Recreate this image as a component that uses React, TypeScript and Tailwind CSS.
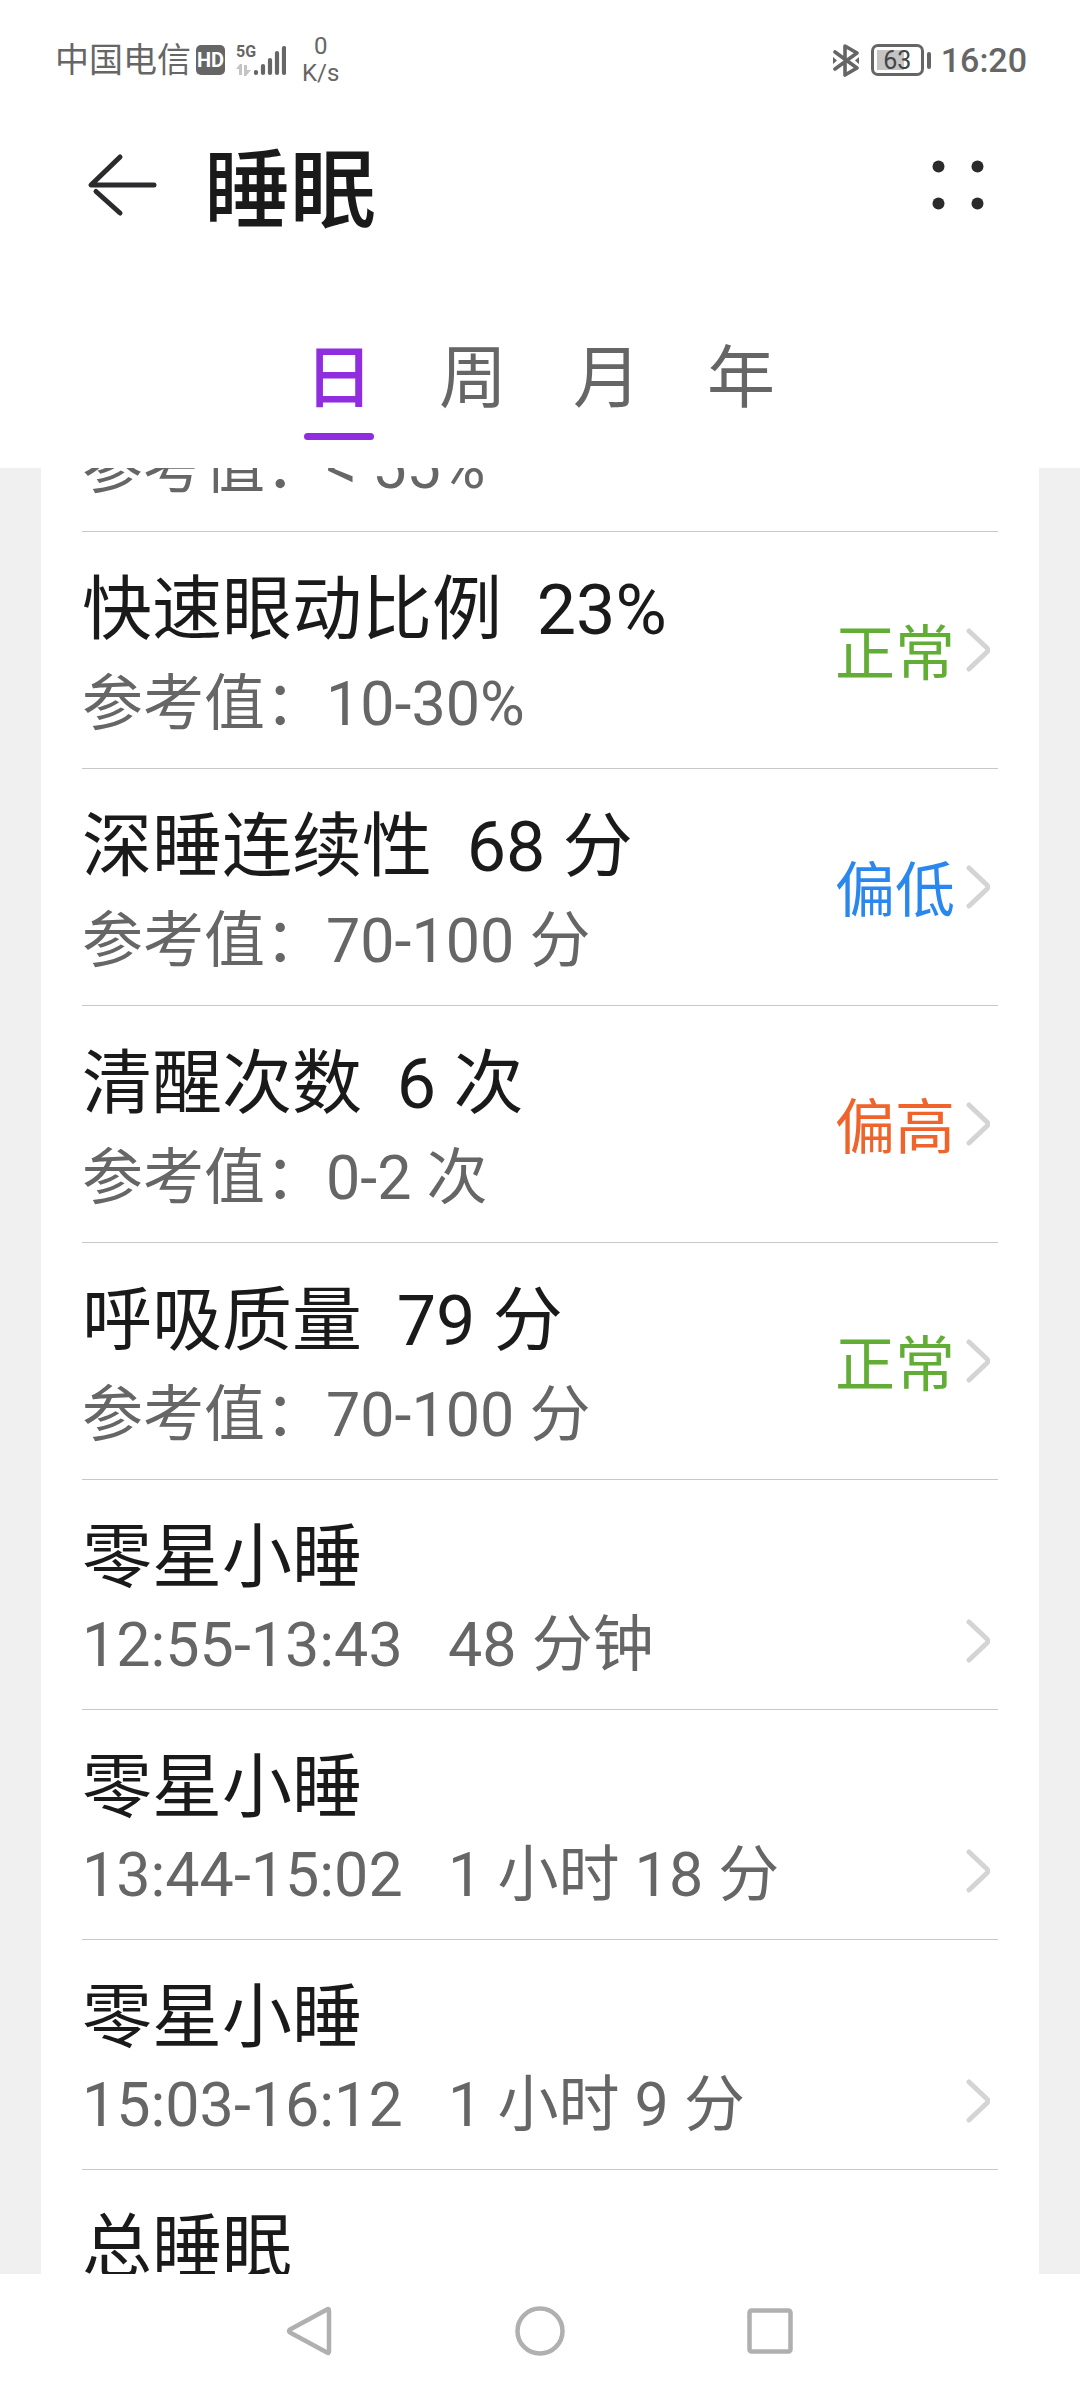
import { useState } from "react";

type Tone = "normal" | "low" | "high";

const toneClass: Record<Tone, string> = {
  normal: "text-[#62ad35]",
  low: "text-[#2a87ee]",
  high: "text-[#f0642b]",
};

const metrics: { title: string; value: string; range: string; status: string; tone: Tone }[] = [
  { title: "快速眼动比例", value: "23%", range: "10-30%", status: "正常", tone: "normal" },
  { title: "深睡连续性", value: "68 分", range: "70-100 分", status: "偏低", tone: "low" },
  { title: "清醒次数", value: "6 次", range: "0-2 次", status: "偏高", tone: "high" },
  { title: "呼吸质量", value: "79 分", range: "70-100 分", status: "正常", tone: "normal" },
];

const naps = [
  { time: "12:55-13:43", duration: "48 分钟" },
  { time: "13:44-15:02", duration: "1 小时 18 分" },
  { time: "15:03-16:12", duration: "1 小时 9 分" },
];

function Chevron() {
  return (
    <svg className="block h-[44px] w-[24px] shrink-0" viewBox="0 0 24 44" fill="none" stroke="#d4d4d4" strokeWidth="5" strokeLinecap="round" strokeLinejoin="round" aria-hidden="true">
      <path d="M3 3 21 20Q22.500 22 21 24L3 41" />
    </svg>
  );
}

function StatusBar() {
  return (
    <div className="flex h-[120px] shrink-0 items-center justify-between pr-[53px] pl-[55px] text-[#666]">
      <div className="flex items-center">
        <span className="text-[34px] leading-[36px]">中国电信</span>
        <span className="ml-[5px] flex h-[30px] w-[29px] items-center justify-center rounded-[5px] bg-[#666] text-[20px] leading-none font-bold text-white">HD</span>
        <div className="ml-[11px] flex h-[32px] w-[18px] flex-col justify-between">
          <span className="text-[16px] leading-[16px] font-bold">5G</span>
          <svg className="h-[12px] w-[16px]" viewBox="0 0 16 12" fill="#c4c4c4" aria-hidden="true">
            <path d="M0 5 4 0H6V11H3V5ZM8 1H11V6L15 6 10 12H8Z" />
          </svg>
        </div>
        <svg className="h-[32px] w-[32px]" viewBox="0 0 32 32" stroke="#666" strokeWidth="4.200" strokeLinecap="round" role="img" aria-label="信号">
          <path d="M2 28V29M9 22V29M16 16V29M23 9V29M30 4V29" />
        </svg>
        <div className="ml-[16px] flex flex-col items-center text-[24px] leading-[27px]">
          <span>0</span>
          <span>K/s</span>
        </div>
      </div>
      <div className="flex items-center">
        <svg className="h-[34px] w-[28px]" viewBox="0 0 28 34" fill="none" stroke="#666" strokeWidth="3.600" strokeLinecap="round" strokeLinejoin="round" role="img" aria-label="蓝牙">
          <path d="M3 9 25 25 13 32V3L25 10 3 26" />
          <path d="M1 14 5 17.500 1 21ZM27 14 23 17.500 27 21Z" fill="#666" stroke="none" />
        </svg>
        <div className="ml-[11px] flex h-[32px] w-[53px] rounded-[7px] border-[3px] border-[#666] p-[3px]">
          <div className="flex w-full items-center justify-center bg-linear-to-r from-[#c4c4c4] from-65% to-transparent to-65% text-[25px] leading-none text-[#444]">63</div>
        </div>
        <div className="ml-[3px] h-[17px] w-[4px] rounded-full bg-[#666]" />
        <span className="ml-[10px] text-[34px] leading-[36px] font-medium">16:20</span>
      </div>
    </div>
  );
}

function Header() {
  return (
    <header className="flex h-[130px] shrink-0 items-center justify-between pr-[96px] pl-[86px]">
      <div className="flex items-center">
        <button type="button" aria-label="返回">
          <svg className="block h-[66px] w-[72px]" viewBox="0 0 72 66" fill="none" stroke="#2b2b2e" strokeWidth="5" strokeLinecap="round" strokeLinejoin="round">
            <path d="M34 5 5 33H68" />
            <path d="M10 39.500 34 61" />
          </svg>
        </button>
        <h1 className="ml-[46px] pt-[14px] text-[86px] leading-[116px] font-medium text-[#1a1a1a]">睡眠</h1>
      </div>
      <button type="button" aria-label="更多">
        <svg className="block h-[50px] w-[52px]" viewBox="0 0 52 50" fill="#2b2b2b">
          <circle cx="6.500" cy="6.500" r="6" />
          <circle cx="45.500" cy="6.500" r="6" />
          <circle cx="6.500" cy="43.500" r="6" />
          <circle cx="45.500" cy="43.500" r="6" />
        </svg>
      </button>
    </header>
  );
}

function Tabs() {
  const [active, setActive] = useState("日");
  return (
    <div role="tablist" className="flex h-[218px] shrink-0 items-end justify-center gap-[64px] pb-[28px]">
      {["日", "周", "月", "年"].map((t) => (
        <button
          key={t}
          type="button"
          role="tab"
          aria-selected={t === active}
          onClick={() => setActive(t)}
          className={
            t === active
              ? "flex w-[70px] flex-col items-center gap-[6px] text-[68px] leading-[96px] font-medium text-[#8f2ddf]"
              : "flex w-[70px] flex-col items-center gap-[6px] text-[68px] leading-[96px] text-[#666]"
          }
        >
          {t}
          <span className={t === active ? "h-[7px] w-full rounded-full bg-[#8f2ddf]" : "h-[7px] w-full"} />
        </button>
      ))}
    </div>
  );
}

export default function App() {
  return (
    <div className="flex h-screen flex-col overflow-hidden bg-white font-[Roboto,'Noto_Sans_CJK_SC',sans-serif]">
      <StatusBar />
      <Header />
      <Tabs />
      <main className="min-h-0 flex-1 overflow-hidden bg-[#f0f0f0] px-[41px]">
        <ul className="min-h-full bg-white px-[41px]">
          <li className="flex h-[64px] flex-col justify-end overflow-hidden border-b border-[#c8c8c8] pb-[24px]">
            <p className="text-[61px] leading-[80px] whitespace-pre text-[#666]">参考值：&lt; 55%</p>
          </li>
          {metrics.map((m) => (
            <li key={m.title} className="border-b border-[#c8c8c8]">
              <button type="button" className="flex w-full items-center pt-[24px] pr-[8px] pb-[24px] text-left">
                <span className="flex-1 whitespace-pre">
                  <span className="block text-[70px] leading-[108px] text-[#1a1a1a]">{m.title}{"  "}{m.value}</span>
                  <span className="block text-[61px] leading-[80px] text-[#666]">参考值：{m.range}</span>
                </span>
                <span className={`mr-[11px] pt-[10px] text-[60px] leading-[80px] ${toneClass[m.tone]}`}>{m.status}</span>
                <Chevron />
              </button>
            </li>
          ))}
          {naps.map((n) => (
            <li key={n.time} className="border-b border-[#c8c8c8]">
              <button type="button" className="block w-full pt-[32px] pr-[8px] pb-[24px] text-left whitespace-pre">
                <span className="block text-[70px] leading-[93px] text-[#1a1a1a]">零星小睡</span>
                <span className="flex items-start justify-between text-[61px] leading-[80px] text-[#666]">
                  {n.time}{"   "}{n.duration}
                  <span className="pt-[14px]">
                    <Chevron />
                  </span>
                </span>
              </button>
            </li>
          ))}
          <li className="pt-[32px]">
            <p className="text-[70px] leading-[93px] text-[#1a1a1a]">总睡眠</p>
          </li>
        </ul>
      </main>
      <nav className="flex h-[114px] shrink-0 items-center justify-center gap-[178px] bg-white">
        <button type="button" aria-label="返回">
          <svg className="block h-[52px] w-[52px]" viewBox="0 0 52 52" fill="none" stroke="#b0b0b0" strokeWidth="4.500" strokeLinejoin="round">
            <path d="M43 4.500Q45 3 45 6V46Q45 49 43 47.500L6 27.500Q4 26 6 24.500Z" />
          </svg>
        </button>
        <button type="button" aria-label="主屏幕">
          <svg className="block h-[52px] w-[52px]" viewBox="0 0 52 52" fill="none" stroke="#b0b0b0" strokeWidth="4.500">
            <circle cx="26" cy="26" r="22.500" />
          </svg>
        </button>
        <button type="button" aria-label="最近任务">
          <svg className="block h-[52px] w-[52px]" viewBox="0 0 52 52" fill="none" stroke="#b0b0b0" strokeWidth="4.500">
            <rect x="5.500" y="5.500" width="41" height="41" rx="2" />
          </svg>
        </button>
      </nav>
    </div>
  );
}
